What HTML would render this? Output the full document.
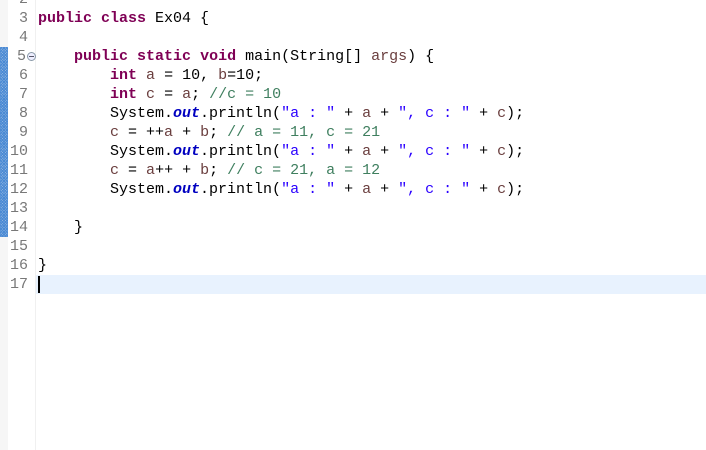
<!DOCTYPE html>
<html><head><meta charset="utf-8"><style>
body{margin:0;width:706px;height:450px;background:#fff;overflow:hidden;position:relative;font-family:"Liberation Mono",monospace;font-size:15px;}
.strip{position:absolute;left:0;top:0;width:8px;height:450px;background:#f6f6f6;}
.blue{position:absolute;left:0;top:47px;width:8px;height:190px;background-color:#8fb4e0;background-image:repeating-linear-gradient(45deg,#4a8ad4 0 1px,transparent 1px 2px),repeating-linear-gradient(-45deg,#4a8ad4 0 1px,transparent 1px 2px);}
.sep{position:absolute;left:35px;top:0;width:1px;height:450px;background:#f0f0f0;}
.hl{position:absolute;left:36px;top:275px;width:670px;height:19px;background:#e8f2fe;}
.caret{position:absolute;left:38px;top:276px;width:2px;height:17px;background:#000;}
.ln{position:absolute;left:8px;width:20px;text-align:right;color:#787878;height:19px;line-height:19px;}
.c{position:absolute;left:38px;white-space:pre;height:19px;line-height:19px;color:#000;}
.k{color:#7f0055;font-weight:bold}.s{color:#2a00ff}.m{color:#3f7f5f}.f{color:#0000c0;font-weight:bold;font-style:italic}.v{color:#6a3e3e}
.fold{position:absolute;left:27px;top:52px;width:7px;height:7px;border:1px solid #8a9aa8;border-radius:50%;background:#eef;}
.fold:after{content:"";position:absolute;left:1px;top:3px;width:5px;height:1px;background:#556;}
</style></head><body>
<div class="strip"></div><div class="blue"></div><div class="sep"></div><div class="hl"></div>
<div class="ln" style="top:-10px">2</div>
<div class="ln" style="top:9px">3</div>
<div class="ln" style="top:28px">4</div>
<div class="ln" style="top:47px;width:18px">5</div><div class="fold"></div>
<div class="ln" style="top:66px">6</div>
<div class="ln" style="top:85px">7</div>
<div class="ln" style="top:104px">8</div>
<div class="ln" style="top:123px">9</div>
<div class="ln" style="top:142px">10</div>
<div class="ln" style="top:161px">11</div>
<div class="ln" style="top:180px">12</div>
<div class="ln" style="top:199px">13</div>
<div class="ln" style="top:218px">14</div>
<div class="ln" style="top:237px">15</div>
<div class="ln" style="top:256px">16</div>
<div class="ln" style="top:275px">17</div>
<div class="c" style="top:9px"><span class="k">public</span> <span class="k">class</span> Ex04 {</div>
<div class="c" style="top:47px">    <span class="k">public</span> <span class="k">static</span> <span class="k">void</span> main(String[] <span class="v">args</span>) {</div>
<div class="c" style="top:66px">        <span class="k">int</span> <span class="v">a</span> = 10, <span class="v">b</span>=10;</div>
<div class="c" style="top:85px">        <span class="k">int</span> <span class="v">c</span> = <span class="v">a</span>; <span class="m">//c = 10</span></div>
<div class="c" style="top:104px">        System.<span class="f">out</span>.println(<span class="s">"a : "</span> + <span class="v">a</span> + <span class="s">", c : "</span> + <span class="v">c</span>);</div>
<div class="c" style="top:123px">        <span class="v">c</span> = ++<span class="v">a</span> + <span class="v">b</span>; <span class="m">// a = 11, c = 21</span></div>
<div class="c" style="top:142px">        System.<span class="f">out</span>.println(<span class="s">"a : "</span> + <span class="v">a</span> + <span class="s">", c : "</span> + <span class="v">c</span>);</div>
<div class="c" style="top:161px">        <span class="v">c</span> = <span class="v">a</span>++ + <span class="v">b</span>; <span class="m">// c = 21, a = 12</span></div>
<div class="c" style="top:180px">        System.<span class="f">out</span>.println(<span class="s">"a : "</span> + <span class="v">a</span> + <span class="s">", c : "</span> + <span class="v">c</span>);</div>
<div class="c" style="top:218px">    }</div>
<div class="c" style="top:256px">}</div>
<div class="caret"></div>
</body></html>
